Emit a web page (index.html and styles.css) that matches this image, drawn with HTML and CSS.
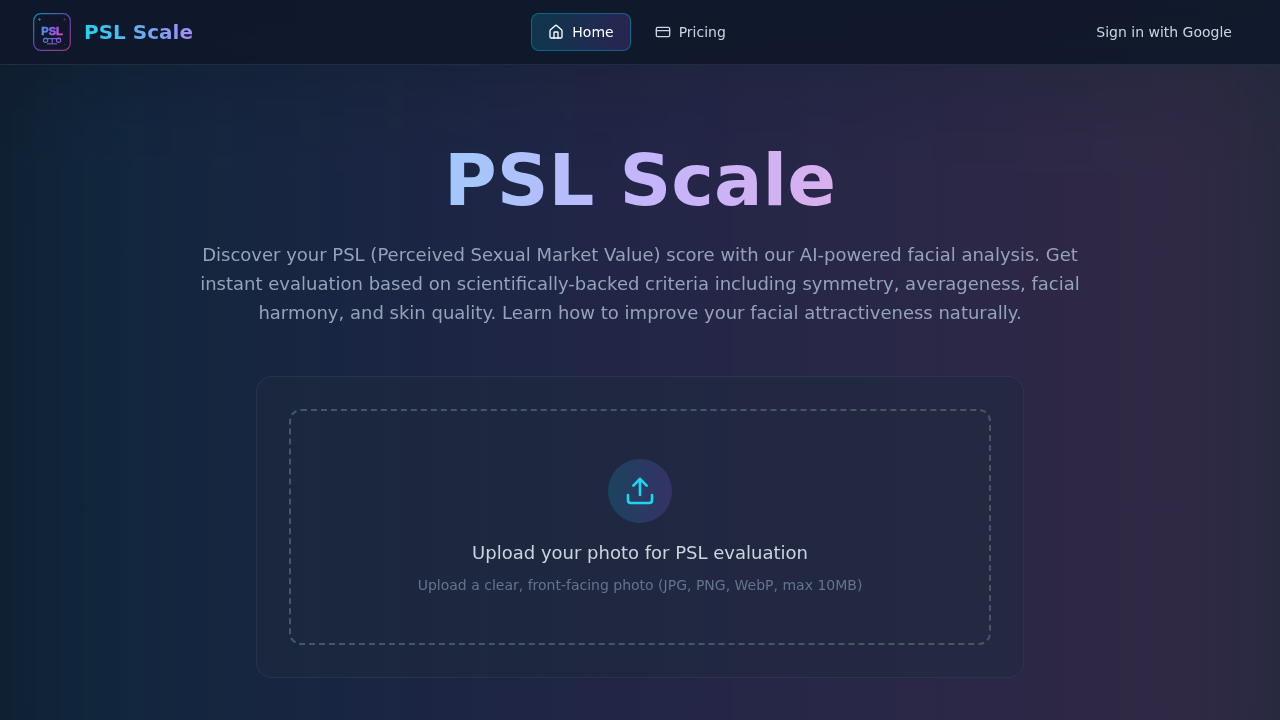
FILE: index.html
```
<!DOCTYPE html>
<html lang="en">
<head>
    <meta charset="UTF-8">
    <meta name="viewport" content="width=device-width, initial-scale=1.0">
    <title>PSL Scale</title>
    <link rel="stylesheet" href="styles.css">
</head>
<body>
    <div class="glow"></div>
    <header class="header">
        <a href="#" class="brand">
            <svg class="logo" viewBox="0 0 40 40" fill="none" aria-hidden="true">
                <defs>
                    <linearGradient id="frame" x1="0" y1="0" x2="1" y2="1">
                        <stop offset="0" stop-color="#0891b2"/>
                        <stop offset="0.5" stop-color="#6045b5"/>
                        <stop offset="1" stop-color="#a8327a"/>
                    </linearGradient>
                    <linearGradient id="letters" gradientUnits="userSpaceOnUse" x1="9" y1="14" x2="31" y2="24">
                        <stop offset="0" stop-color="#3b9fe0"/>
                        <stop offset="0.5" stop-color="#8b5cf6"/>
                        <stop offset="1" stop-color="#d946a8"/>
                    </linearGradient>
                </defs>
                <rect x="1.7" y="1.7" width="36.6" height="36.6" rx="7" fill="#10172b" stroke="url(#frame)" stroke-width="1.2"/>
                <path d="M7.5 6v3M6 7.5h3" stroke="#0e7f9c"/>
                <path d="M32.5 6.5v2M31.5 7.5h2" stroke="#7d2c62" stroke-width="0.8"/>
                <circle cx="32.5" cy="32.5" r="0.5" fill="#4a3b8f"/>
                <text class="logo-text" x="20" y="22.5" text-anchor="middle" fill="url(#letters)" stroke="url(#letters)" stroke-width="0.6">PSL</text>
                <path d="M12 26.6h17M20.2 26.6v5" stroke="#6d5fd0" stroke-width="1.2"/>
                <path d="M15 31.8h10" stroke="#8250c4" stroke-width="1.2"/>
                <circle cx="13.6" cy="28.3" r="2.1" stroke="#4c74c8" stroke-width="1.2"/>
                <circle cx="26.6" cy="28.3" r="2.1" stroke="#8a58cc" stroke-width="1.2"/>
            </svg>
            <span class="brand-name">PSL Scale</span>
        </a>
        <nav class="nav">
            <a href="#" class="nav-link active">
                <svg class="icon" viewBox="0 0 24 24" aria-hidden="true">
                    <path d="M15 21v-8a1 1 0 0 0-1-1h-4a1 1 0 0 0-1 1v8"/>
                    <path d="M3 10a2 2 0 0 1 .709-1.528l7-6a2 2 0 0 1 2.582 0l7 6A2 2 0 0 1 21 10v9a2 2 0 0 1-2 2H5a2 2 0 0 1-2-2z"/>
                </svg>
                Home
            </a>
            <a href="#" class="nav-link">
                <svg class="icon" viewBox="0 0 24 24" aria-hidden="true">
                    <rect width="20" height="14" x="2" y="5" rx="2"/>
                    <path d="M2 10h20"/>
                </svg>
                Pricing
            </a>
        </nav>
        <button type="button" class="sign-in">Sign in with Google</button>
    </header>
    <main class="main">
        <h1 class="title">PSL Scale</h1>
        <p class="intro">Discover your PSL (Perceived Sexual Market Value) score with our AI-powered facial analysis. Get instant evaluation based on scientifically-backed criteria including symmetry, averageness, facial harmony, and skin quality. Learn how to improve your facial attractiveness naturally.</p>
        <section class="card">
            <label class="dropzone" for="photo">
                <input type="file" id="photo" class="file-input" accept=".jpg,.jpeg,.png,.webp">
                <span class="upload-badge">
                    <svg class="upload-icon" viewBox="0 0 24 24" aria-hidden="true">
                        <path d="M21 15v4a2 2 0 0 1-2 2H5a2 2 0 0 1-2-2v-4"/>
                        <path d="M17 8l-5-5-5 5"/>
                        <path d="M12 3v12"/>
                    </svg>
                </span>
                <span class="upload-title">Upload your photo for PSL evaluation</span>
                <span class="upload-hint">Upload a clear, front-facing photo (JPG, PNG, WebP, max 10MB)</span>
            </label>
        </section>
    </main>
</body>
</html>
```
FILE: styles.css
```
* {
    box-sizing: border-box;
}

body {
    margin: 0;
    min-height: 100vh;
    font-family: "DejaVu Sans", sans-serif;
    font-size: 14px;
    line-height: 20px;
    color: #cbd5e1;
    background: linear-gradient(to right, #0f1a2a, #1e293b);
}

/* soft colour wash behind the whole page */
.glow {
    position: fixed;
    inset: 48px 0 -160px;
    background: linear-gradient(to right, rgba(6, 150, 212, 0.1), rgba(139, 70, 246, 0.11), rgba(236, 50, 153, 0.1));
    filter: blur(64px);
}

.header {
    position: relative;
    display: flex;
    align-items: center;
    justify-content: space-between;
    padding: 12px 32px;
    background: rgba(15, 23, 42, 0.9);
    border-bottom: 1px solid rgba(51, 65, 85, 0.5);
}

.brand {
    display: flex;
    align-items: center;
    gap: 12px;
    text-decoration: none;
}

.logo {
    width: 40px;
    height: 40px;
}

.logo-text {
    font-family: "Liberation Sans", sans-serif;
    font-size: 11px;
    font-weight: bold;
}

.brand-name {
    font-size: 20px;
    line-height: 28px;
    font-weight: bold;
    color: transparent;
    background: linear-gradient(to right, #22d3ee, #a78bfa);
    -webkit-background-clip: text;
    background-clip: text;
}

.nav {
    display: flex;
    align-items: center;
    gap: 8px;
}

.nav-link {
    display: flex;
    align-items: center;
    gap: 8px;
    padding: 8px 16px;
    border-radius: 8px;
    color: #cbd5e1;
    text-decoration: none;
}

.nav-link.active {
    color: #fff;
    border: 1px solid rgba(6, 182, 212, 0.4);
    background: linear-gradient(to right, rgba(6, 182, 212, 0.2), rgba(139, 92, 246, 0.2));
}

.icon {
    width: 16px;
    height: 16px;
}

.icon,
.upload-icon {
    fill: none;
    stroke: currentColor;
    stroke-width: 2;
    stroke-linecap: round;
    stroke-linejoin: round;
}

.sign-in {
    padding: 8px 16px;
    border: none;
    border-radius: 8px;
    background: none;
    color: inherit;
    font: inherit;
    cursor: pointer;
}

.main {
    position: relative;
    max-width: 1024px;
    margin: 0 auto;
    padding: 79px 0 42px;
    text-align: center;
}

.title {
    margin: 0 0 24px;
    font-size: 72px;
    line-height: 72px;
    font-weight: bold;
    color: transparent;
    background: linear-gradient(to right, #67e8f9, #c4b5fd, #f9a8d4);
    -webkit-background-clip: text;
    background-clip: text;
}

.intro {
    max-width: 896px;
    margin: 0 auto 49px;
    font-size: 18px;
    line-height: 29px;
    color: #94a3b8;
}

.card {
    max-width: 768px;
    margin: 0 auto;
    padding: 32px;
    border: 1px solid rgba(51, 65, 85, 0.5);
    border-radius: 16px;
    background: rgba(30, 41, 59, 0.5);
}

.dropzone {
    display: flex;
    flex-direction: column;
    align-items: center;
    padding: 48px;
    border: 2px dashed #475569;
    border-radius: 12px;
    cursor: pointer;
}

.file-input {
    position: absolute;
    width: 1px;
    height: 1px;
    opacity: 0;
}

.upload-badge {
    display: flex;
    align-items: center;
    justify-content: center;
    width: 64px;
    height: 64px;
    margin-bottom: 16px;
    border-radius: 50%;
    background: linear-gradient(to right, rgba(6, 182, 212, 0.2), rgba(139, 92, 246, 0.2));
}

.upload-icon {
    width: 32px;
    height: 32px;
    color: #22d3ee;
}

.upload-title {
    margin-bottom: 8px;
    font-size: 18px;
    line-height: 28px;
}

.upload-hint {
    color: #64748b;
}
```
